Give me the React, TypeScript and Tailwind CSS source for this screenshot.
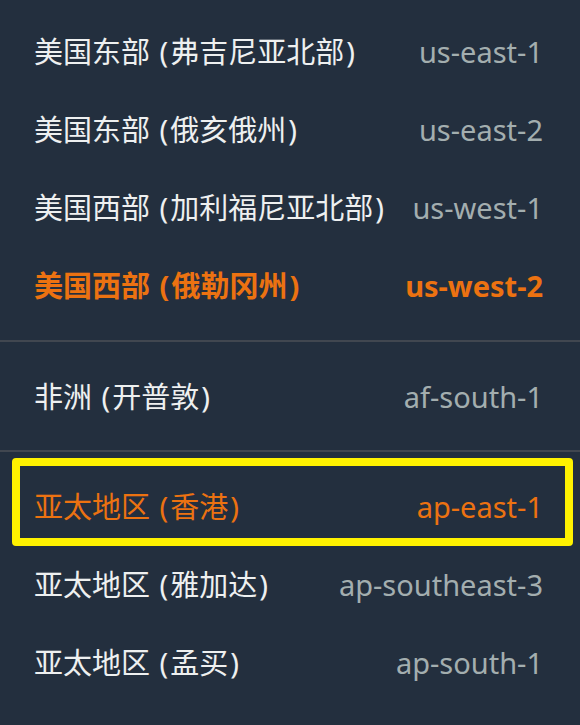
import React from "react";

type Region = { name: string; code: string; state?: "selected" | "focused" };

const groups: Region[][] = [
  [
    { name: "美国东部 (弗吉尼亚北部)", code: "us-east-1" },
    { name: "美国东部 (俄亥俄州)", code: "us-east-2" },
    { name: "美国西部 (加利福尼亚北部)", code: "us-west-1" },
    { name: "美国西部 (俄勒冈州)", code: "us-west-2", state: "selected" },
  ],
  [{ name: "非洲 (开普敦)", code: "af-south-1" }],
  [
    { name: "亚太地区 (香港)", code: "ap-east-1", state: "focused" },
    { name: "亚太地区 (雅加达)", code: "ap-southeast-3" },
    { name: "亚太地区 (孟买)", code: "ap-south-1" },
  ],
];

function Row({ r }: { r: Region }) {
  const selected = r.state === "selected";
  const focused = r.state === "focused";
  const nameColor = selected || focused ? "text-[#ec7211]" : "text-[#eef0f0]";
  const codeColor = selected || focused ? "text-[#ec7211]" : "text-[#a3aeaf]";
  const weight = selected ? "font-bold" : "font-normal";
  return (
    <div className="relative flex h-[78px] items-center justify-between gap-4 pl-[34px] pr-[37px]">
      <span className={`${nameColor} ${weight} whitespace-nowrap`}>
        {r.name.split(/([()])/).map((part, i) =>
          part === "(" || part === ")" ? (
            <span key={i} className="mx-[2px]">
              {part}
            </span>
          ) : (
            <React.Fragment key={i}>{part}</React.Fragment>
          )
        )}
      </span>
      <span className={`${codeColor} ${weight} whitespace-nowrap`}>{r.code}</span>
      {focused && (
        <div className="pointer-events-none absolute left-[12px] right-[7px] top-[-9px] bottom-[-1px] rounded-[4px] border-[8px] border-[#fff200]" />
      )}
    </div>
  );
}

export default function App() {
  return (
    <div
      className="h-[725px] w-[580px] overflow-hidden bg-[#232f3e] text-[29px] leading-none"
      style={{ fontFamily: '"Noto Sans", "Noto Sans CJK SC", sans-serif' }}
    >
      <div className="pt-[12px] pb-[16px]">
        {groups[0].map((r) => (
          <Row key={r.code} r={r} />
        ))}
      </div>
      <div className="h-[2px] bg-[#414750]" />
      <div className="py-[15px]">
        {groups[1].map((r) => (
          <Row key={r.code} r={r} />
        ))}
      </div>
      <div className="h-[2px] bg-[#414750]" />
      <div className="pt-[15px]">
        {groups[2].map((r) => (
          <Row key={r.code} r={r} />
        ))}
      </div>
    </div>
  );
}
